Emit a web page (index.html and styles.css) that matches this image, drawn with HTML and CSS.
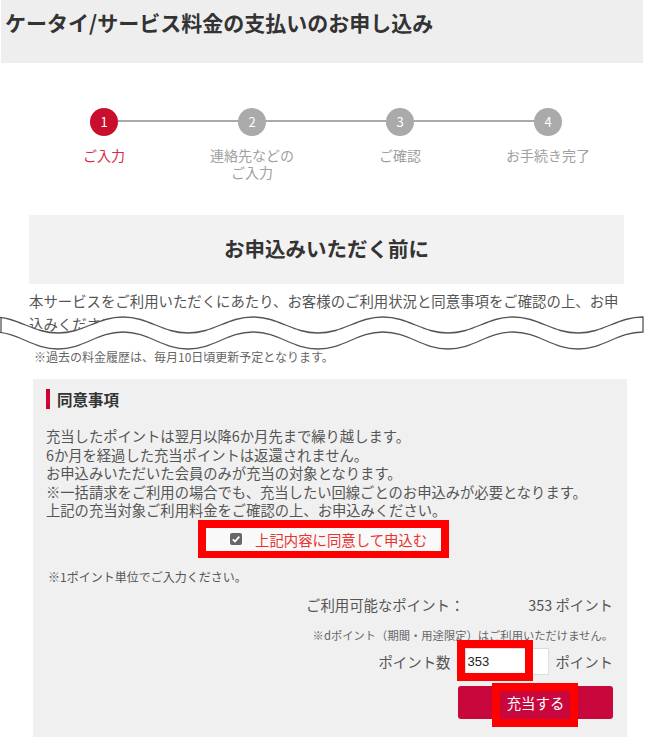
FILE: index.html
```html
<!DOCTYPE html>
<html lang="ja">
<head>
    <meta charset="UTF-8">
    <meta name="viewport" content="width=device-width, initial-scale=1.0">
    <title>ケータイ/サービス料金の支払いのお申し込み</title>
    <link rel="stylesheet" href="styles.css">
</head>
<body>
    <header class="page-head">
        <h1 class="page-title">ケータイ/サービス料金の支払いのお申し込み</h1>
    </header>

    <main class="content">
        <!-- 申込みステップ -->
        <ol class="steps">
            <li class="step is-current">
                <span class="step-num">1</span>
                <span class="step-label">ご入力</span>
            </li>
            <li class="step">
                <span class="step-num">2</span>
                <span class="step-label">連絡先などの<br>ご入力</span>
            </li>
            <li class="step">
                <span class="step-num">3</span>
                <span class="step-label">ご確認</span>
            </li>
            <li class="step">
                <span class="step-num">4</span>
                <span class="step-label">お手続き完了</span>
            </li>
        </ol>

        <section class="intro">
            <h2 class="intro-title">お申込みいただく前に</h2>
            <p class="intro-text">本サービスをご利用いただくにあたり、お客様のご利用状況と同意事項をご確認の上、お申込みください。</p>

            <!-- 省略の波線 -->
            <svg class="cut-wave" width="645" height="40" viewBox="0 0 645 40">
                <path d="M-7 5 C19 5 32 21 58 21 S97 5 123 5 S162 21 188 21 S227 5 253 5 S292 21 318 21 S357 5 383 5 S422 21 448 21 S487 5 513 5 S552 21 578 21 S617 5 643 5 L643 20 C617 20 604 37 578 37 S539 20 513 20 S474 37 448 37 S409 20 383 20 S344 37 318 37 S279 20 253 20 S214 37 188 37 S149 20 123 20 S84 37 58 37 S19 20 -7 20 Z" fill="#fff" stroke="#555" stroke-width="1.3"/>
                <path d="M1 5 V20" stroke="#555" stroke-width="1.3"/>
            </svg>

            <p class="cut-note">※過去の料金履歴は、毎月10日頃更新予定となります。</p>
        </section>

        <section class="agree-panel">
            <h3 class="agree-title">同意事項</h3>
            <p class="agree-body">
                充当したポイントは翌月以降6か月先まで繰り越します。<br>
                6か月を経過した充当ポイントは返還されません。<br>
                お申込みいただいた会員のみが充当の対象となります。<br>
                ※一括請求をご利用の場合でも、充当したい回線ごとのお申込みが必要となります。<br>
                上記の充当対象ご利用料金をご確認の上、お申込みください。
            </p>

            <label class="agree-check">
                <span class="check-box">
                    <svg width="12" height="12" viewBox="0 0 12 12"><polyline points="2.8,6.3 5,8.5 9.3,3.6" fill="none" stroke="#fff" stroke-width="1.8"/></svg>
                </span>
                <span class="check-label">上記内容に同意して申込む</span>
            </label>

            <p class="unit-note">※1ポイント単位でご入力ください。</p>

            <div class="points">
                <div class="points-avail">
                    <span>ご利用可能なポイント：</span>
                    <span>353 ポイント</span>
                </div>
                <p class="points-note">※dポイント（期間・用途限定）はご利用いただけません。</p>
                <div class="points-input">
                    <span>ポイント数</span>
                    <span class="input-wrap">
                        <input type="text" class="point-field" value="353">
                        <span class="mark mark-input"></span>
                    </span>
                    <span>ポイント</span>
                </div>
                <button class="apply-btn">
                    充当する
                    <span class="mark mark-btn"></span>
                </button>
            </div>
        </section>
    </main>
</body>
</html>
```

FILE: styles.css
```css
body {
    margin: 0;
    padding: 0;
    background: #fff;
    font-family: "Noto Sans CJK JP", "Noto Sans", sans-serif;
    color: #555;
    width: 645px;
}

.page-head {
    background: #eeeeee;
    height: 63px;
    margin-left: 1px;
    margin-right: 2px;
}

.page-title {
    margin: 0;
    padding: 10px 4px;
    font-size: 21px;
    line-height: 24px;
    font-weight: bold;
    color: #333;
}

/* steps */
.steps {
    list-style: none;
    margin: 45px 0 0 30px;
    padding: 0;
    width: 592px;
    display: grid;
    grid-template-columns: repeat(4, 1fr);
}

.step {
    position: relative;
    display: flex;
    flex-direction: column;
    align-items: center;
}

.step::after {
    content: '';
    position: absolute;
    top: 12px;
    left: 50%;
    width: 100%;
    height: 2px;
    background: #aaa;
}

.step:last-child::after {
    display: none;
}

.step-num {
    position: relative;
    z-index: 1;
    width: 28px;
    height: 28px;
    border-radius: 50%;
    background: #aaa;
    color: #fff;
    font-size: 13px;
    line-height: 28px;
    text-align: center;
}

.step-label {
    margin-top: 11px;
    font-size: 14px;
    line-height: 17px;
    color: #a0a0a0;
    text-align: center;
}

.step.is-current .step-num {
    background: #c8102e;
}

.step.is-current .step-label {
    color: #d42c48;
}

/* intro */
.intro {
    position: relative;
    margin-top: 34px;
    padding: 0 21px 0 29px;
}

.intro-title {
    margin: 0;
    height: 69px;
    background: #f2f2f2;
    font-size: 20.5px;
    line-height: 67px;
    font-weight: bold;
    color: #333;
    text-align: center;
}

.intro-text {
    margin: 5px 0 0;
    font-size: 14.4px;
    line-height: 23px;
    color: #555;
}

.cut-wave {
    position: absolute;
    left: 0;
    top: 97px;
    display: block;
}

.cut-note {
    margin: 15px 0 0;
    padding-left: 5px;
    font-size: 12px;
    line-height: 14px;
    color: #666;
}

/* agree panel */
.agree-panel {
    margin: 15px 0 0 33px;
    width: 594px;
    box-sizing: border-box;
    background: #f0f0f0;
    padding: 10px 14px 18px 13px;
}

.agree-title {
    position: relative;
    margin: 0;
    padding-left: 11px;
    font-size: 15.5px;
    line-height: 20px;
    font-weight: bold;
    color: #333;
}

.agree-title::before {
    content: '';
    position: absolute;
    left: 0;
    top: 0;
    width: 4px;
    height: 20px;
    background: #cc0033;
}

.agree-body {
    margin: 18px 0 0;
    font-size: 14.3px;
    line-height: 18.5px;
    color: #555;
}

.agree-check {
    display: flex;
    align-items: center;
    width: 251px;
    height: 38px;
    box-sizing: border-box;
    margin-left: 152px;
    border: 8px solid #ff0000;
    border-bottom-width: 7px;
    background: #f9f9f9;
    padding-left: 24px;
}

.check-box {
    width: 12px;
    height: 12px;
    border-radius: 2px;
    background: #666;
    display: flex;
}

.check-label {
    margin-left: 13px;
    font-size: 14.4px;
    color: #e8332f;
    white-space: nowrap;
}

.unit-note {
    margin: 11px 0 0 2px;
    font-size: 12px;
    line-height: 16px;
    color: #555;
}

/* points */
.points {
    width: 307px;
    margin-left: auto;
}

.points-avail {
    margin-top: 10px;
    display: flex;
    justify-content: space-between;
    font-size: 14.4px;
    line-height: 20px;
    color: #555;
}

.points-note {
    margin: 12px 0 0;
    font-size: 11.3px;
    line-height: 16px;
    color: #666;
    text-align: right;
    white-space: nowrap;
}

.points-input {
    margin-top: 5px;
    display: flex;
    justify-content: flex-end;
    align-items: center;
    font-size: 14.4px;
    color: #555;
}

.input-wrap {
    position: relative;
    margin: 0 6px 0 15px;
    display: flex;
}

.point-field {
    width: 84px;
    height: 27px;
    box-sizing: border-box;
    border: 1px solid #ddd;
    background: #fff;
    padding: 0 0 0 1px;
    font-family: "Liberation Sans", sans-serif;
    font-size: 13px;
    color: #222;
}

.apply-btn {
    position: relative;
    display: block;
    margin: 11px 0 0 auto;
    width: 155px;
    height: 33px;
    border: none;
    border-radius: 3px;
    background: #c8073c;
    color: #fff;
    font-family: "Noto Sans CJK JP", sans-serif;
    font-size: 14.4px;
    cursor: pointer;
}

/* 赤枠の注記 */
.mark {
    position: absolute;
    box-sizing: border-box;
    border: 8px solid #ff0000;
}

.mark-input {
    left: -8px;
    top: -8px;
    width: 76px;
    height: 41px;
}

.mark-btn {
    left: 34px;
    top: -3px;
    width: 86px;
    height: 44px;
}
```
